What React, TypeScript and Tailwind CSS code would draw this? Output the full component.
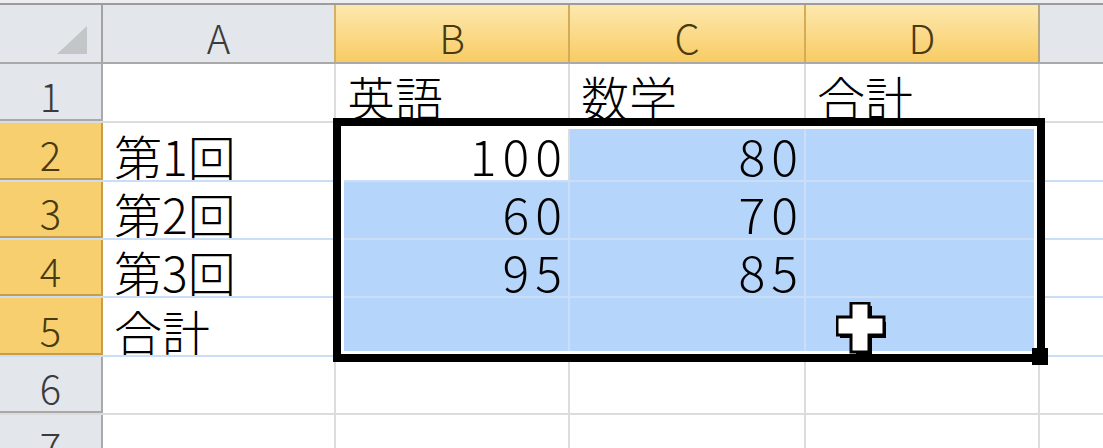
import React from "react";

type Row = {
  n: string;
  h: string;
  a: string;
  b: string;
  c: string;
  d: string;
  sel: boolean;
  nums?: boolean;
};

const rows: Row[] = [
  { n: "1", h: "h-[59px]", a: "", b: "英語", c: "数学", d: "合計", sel: false },
  { n: "2", h: "h-[59px]", a: "第1回", b: "100", c: "80", d: "", sel: true, nums: true },
  { n: "3", h: "h-[58px]", a: "第2回", b: "60", c: "70", d: "", sel: true, nums: true },
  { n: "4", h: "h-[58px]", a: "第3回", b: "95", c: "85", d: "", sel: true, nums: true },
  { n: "5", h: "h-[59px]", a: "合計", b: "", c: "", d: "", sel: true },
  { n: "6", h: "h-[58px]", a: "", b: "", c: "", d: "", sel: false },
  { n: "7", h: "h-[58px]", a: "", b: "", c: "", d: "", sel: false },
];

function Cell({
  width,
  text,
  blue,
  num,
}: {
  width: string;
  text: string;
  blue: boolean;
  num?: boolean;
}) {
  return (
    <div
      className={`${width} shrink-0 h-full border-r-2 overflow-hidden flex items-end ${
        blue ? "bg-[#b6d5fa] border-[#cadff7]" : "bg-white border-[#dcdcdc]"
      } ${num ? "justify-end pr-0 tracking-[6px] text-[50px]" : "justify-start pl-[11px] text-[48px]"}`}
    >
      <span className="leading-none mb-[1px] text-black font-light whitespace-nowrap">{text}</span>
    </div>
  );
}

export default function App() {
  return (
    <div className="relative w-[1103px] h-[448px] overflow-hidden bg-white font-['Noto_Sans_CJK_JP',sans-serif]">
      {/* top strip */}
      <div className="h-[5px] bg-[#eceef0] border-b-2 border-[#9c9c9c]" />

      {/* column headers */}
      <div className="flex h-[59px] border-b-2 border-[#a9a9a9] text-[40px] leading-none font-light">
        <div className="w-[103px] shrink-0 h-full bg-[#e3e6ea] border-r-2 border-[#a3a3a3] flex items-end justify-end pr-[14px] pb-[8px]">
          <svg width="30" height="28" viewBox="0 0 30 28">
            <polygon points="30,0 30,28 0,28" fill="#c3c6c9" />
          </svg>
        </div>
        <div className="w-[233px] shrink-0 h-full bg-[#e3e6ea] border-r-2 border-[#d3b162] flex items-center justify-center pt-[6px] text-[#3b3b3b]">
          A
        </div>
        <div className="w-[234px] shrink-0 h-full bg-gradient-to-b from-[#fde8ad] to-[#f8cc62] border-r-2 border-[#d4ac55] flex items-center justify-center pt-[6px] text-[#4a3a12]">
          B
        </div>
        <div className="w-[236px] shrink-0 h-full bg-gradient-to-b from-[#fde8ad] to-[#f8cc62] border-r-2 border-[#d4ac55] flex items-center justify-center pt-[6px] text-[#4a3a12]">
          C
        </div>
        <div className="w-[234px] shrink-0 h-full bg-gradient-to-b from-[#fde8ad] to-[#f8cc62] border-r-2 border-[#b8a67d] flex items-center justify-center pt-[6px] text-[#4a3a12]">
          D
        </div>
        <div className="flex-1 h-full bg-[#e3e6ea]" />
      </div>

      {/* rows */}
      {rows.map((r) => (
        <div
          key={r.n}
          className={`flex ${r.h} border-b-2 ${r.sel ? "border-[#cadff7]" : "border-[#dcdcdc]"}`}
        >
          <div
            className={`w-[103px] shrink-0 h-full border-r-2 flex items-center justify-center pt-[6px] text-[40px] font-light leading-none -mb-[2px] border-b-2 ${
              r.sel
                ? "bg-[#f8cf6e] border-[#c99d45] text-[#4a3a12]"
                : "bg-[#e3e6ea] border-[#a9a9a9] text-[#3b3b3b]"
            }`}
          >
            {r.n}
          </div>
          <Cell width="w-[233px]" text={r.a} blue={false} />
          <Cell width="w-[234px]" text={r.b} blue={r.sel && r.n !== "2"} num={r.nums} />
          <Cell width="w-[236px]" text={r.c} blue={r.sel} num={r.nums} />
          <Cell width="w-[234px]" text={r.d} blue={r.sel} />
          <div className="flex-1 h-full bg-white" />
        </div>
      ))}

      {/* selection border */}
      <div className="absolute left-[333px] top-[118px] w-[712px] h-[244px] border-[8px] border-black shadow-[inset_0_0_0_3px_white]" />
      {/* fill handle */}
      <div className="absolute left-[1032px] top-[348px] w-[16px] h-[17px] bg-black" />

      {/* cross cursor */}
      <svg
        className="absolute left-[836px] top-[302px]"
        width="54"
        height="56"
        viewBox="0 0 54 56"
      >
        <polygon
          points="20,4 36,4 36,20 50,20 50,36 36,36 36,54 20,54 20,36 4,36 4,20 20,20"
          fill="black"
        />
        <polygon
          points="15,1 33,1 33,15 48,15 48,33 33,33 33,50 15,50 15,33 1,33 1,15 15,15"
          fill="white"
          stroke="black"
          strokeWidth="3"
        />
      </svg>
    </div>
  );
}
